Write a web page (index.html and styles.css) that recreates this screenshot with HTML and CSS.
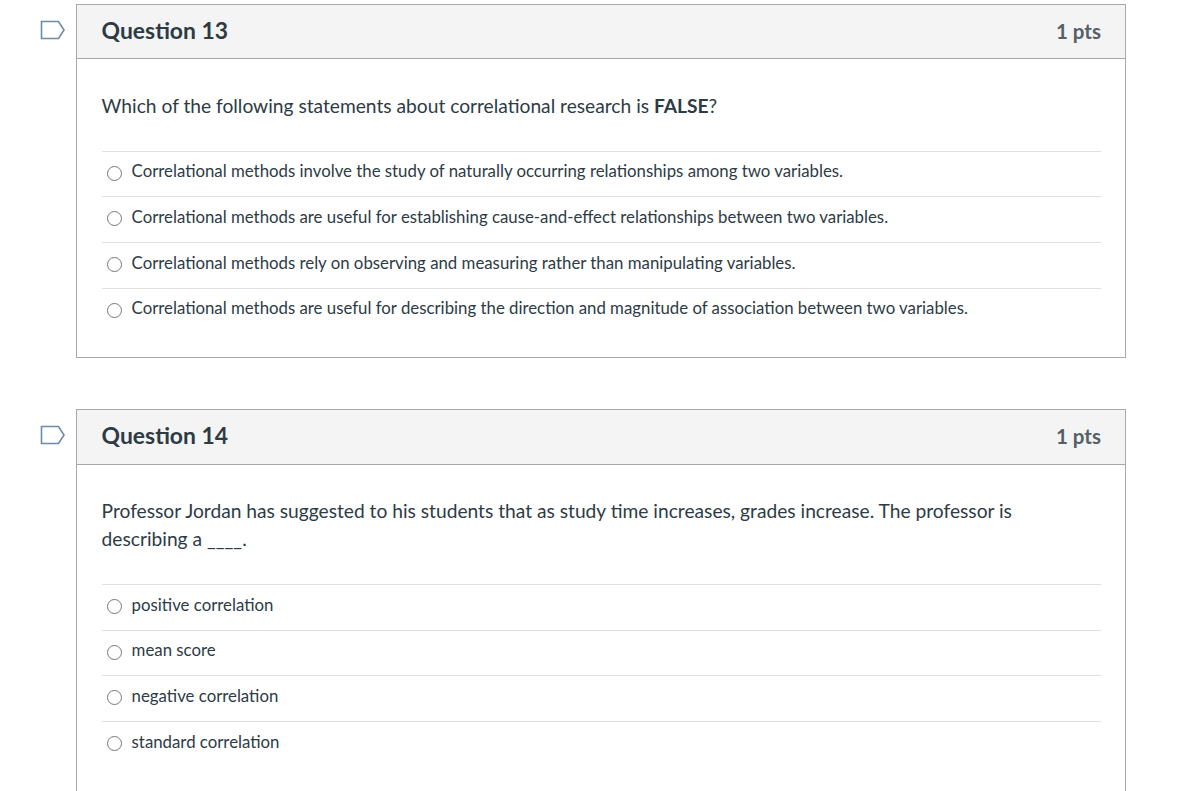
FILE: index.html
```html
<!DOCTYPE html>
<html lang="en">
<head>
  <meta charset="UTF-8">
  <title>Quiz</title>
  <link rel="stylesheet" href="styles.css">
</head>
<body>

<div class="question">
  <svg class="flag" width="26" height="20" viewBox="0 0 26 20"><path d="M1.5 1.5H18.5L24 10L18.5 18.5H1.5Z"/></svg>
  <div class="card">
    <div class="head">
      <h2>Question 13</h2>
      <span class="pts">1 pts</span>
    </div>
    <div class="body">
      <p class="prompt">Which of the following statements about correlational research is <strong>FALSE</strong>?</p>
      <ul class="answers">
        <li><span class="radio"></span>Correlational methods involve the study of naturally occurring relationships among two variables.</li>
        <li><span class="radio"></span>Correlational methods are useful for establishing cause-and-effect relationships between two variables.</li>
        <li><span class="radio"></span>Correlational methods rely on observing and measuring rather than manipulating variables.</li>
        <li><span class="radio"></span>Correlational methods are useful for describing the direction and magnitude of association between two variables.</li>
      </ul>
    </div>
  </div>
</div>

<div class="question">
  <svg class="flag" width="26" height="20" viewBox="0 0 26 20"><path d="M1.5 1.5H18.5L24 10L18.5 18.5H1.5Z"/></svg>
  <div class="card">
    <div class="head head-tall">
      <h2>Question 14</h2>
      <span class="pts">1 pts</span>
    </div>
    <div class="body">
      <p class="prompt">Professor Jordan has suggested to his students that as study time increases, grades increase. The professor is describing a ____.</p>
      <ul class="answers">
        <li><span class="radio"></span>positive correlation</li>
        <li><span class="radio"></span>mean score</li>
        <li><span class="radio"></span>negative correlation</li>
        <li><span class="radio"></span>standard correlation</li>
      </ul>
    </div>
  </div>
</div>

</body>
</html>
```

FILE: styles.css
```css
* {
  margin: 0;
  padding: 0;
  box-sizing: border-box;
  list-style: none;
}

html,
body {
  height: 791px;
  overflow: hidden;
  background-color: #fff;
}

body {
  padding-top: 4px;
  font-family: Lato, "Liberation Sans", sans-serif;
  color: #2d3b45;
  font-variant-ligatures: common-ligatures;
}

.question {
  display: flex;
  align-items: flex-start;
  width: 1126px;
  margin-bottom: 51px;
  padding-left: 40px;
}

.flag {
  flex: none;
  margin: 16px 10px 0 0;
  fill: #fff;
  stroke: #6b8ca8;
  stroke-width: 1.6;
}

.card {
  flex: 1;
  border: 1px solid #a8a8a8;
}

.head {
  display: flex;
  justify-content: space-between;
  align-items: center;
  height: 54px;
  padding: 0 24px 0 24.6px;
  background-color: #f4f4f4;
  border-bottom: 1px solid #a8a8a8;
}

.head-tall {
  height: 55px;
}

.head-tall + .body {
  padding-top: 32px;
  padding-bottom: 40px;
}

h2 {
  margin-bottom: 3px;
  font-size: 22.9px;
  font-weight: 700;
  line-height: 28px;
}

.head-tall h2 {
  margin-bottom: 4px;
}

.pts {
  margin-bottom: 1px;
  font-size: 20.5px;
  font-weight: 700;
  color: #565f66;
}

.head-tall .pts {
  margin-bottom: 2px;
}

.body {
  padding: 33px 24px 23.8px 24.6px;
}

.prompt {
  max-width: 930px;
  font-size: 19.2px;
  line-height: 28px;
  margin-bottom: 30.7px;
}

.answers li {
  display: flex;
  align-items: flex-start;
  height: 45.7px;
  padding-top: 7.6px;
  border-top: 1px solid #dfdfdf;
  font-size: 16.81px;
  line-height: 24px;
}

.radio {
  flex: none;
  width: 15px;
  height: 15px;
  margin: 6.5px 9.5px 0 5.5px;
  border: 1.5px solid #777;
  border-radius: 50%;
}
```
